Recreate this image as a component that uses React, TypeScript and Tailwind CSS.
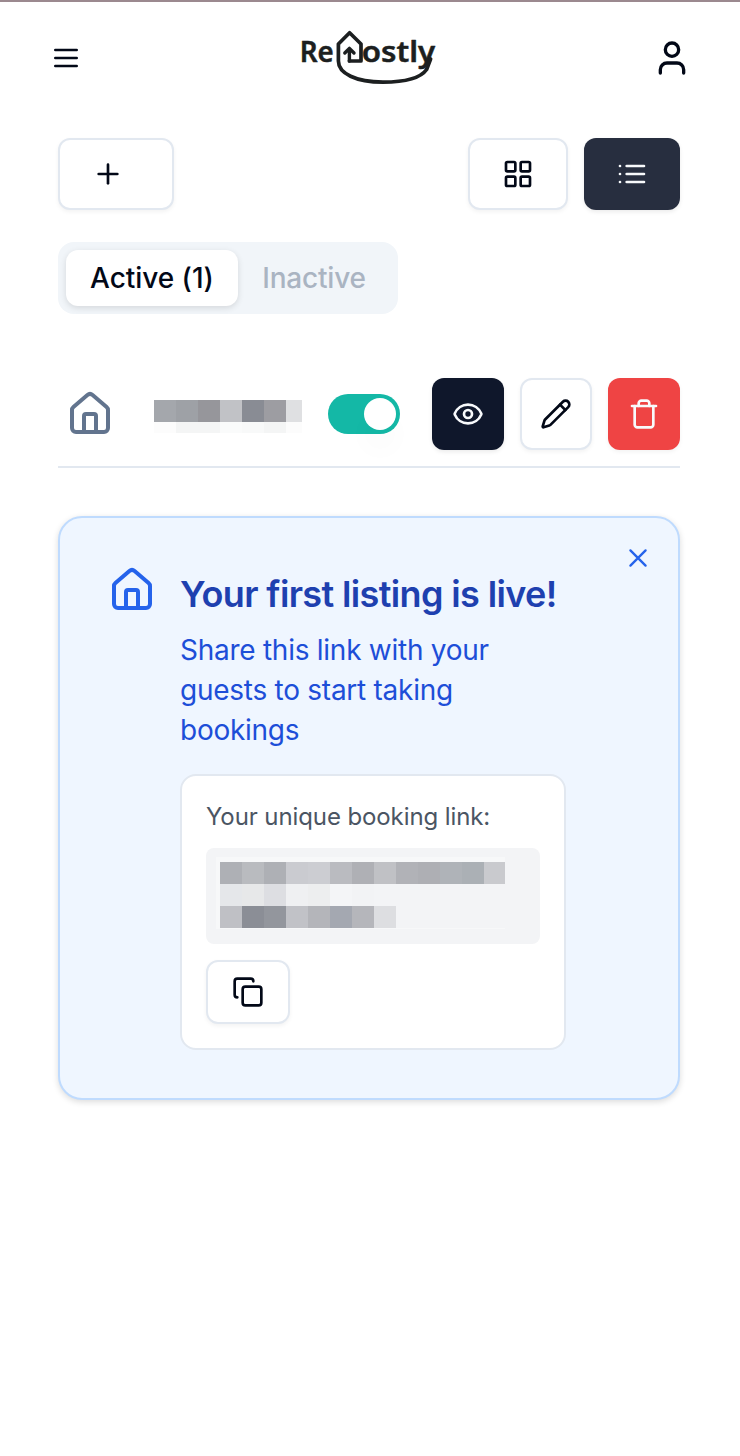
import type { ReactNode } from "react";
import { Copy, Eye, House, LayoutGrid, Pencil, Plus } from "lucide-react";

function Icon({ size, className, children }: { size: number; className?: string; children: ReactNode }) {
  return (
    <svg
      width={size}
      height={size}
      viewBox="0 0 24 24"
      fill="none"
      stroke="currentColor"
      strokeWidth={2}
      strokeLinecap="round"
      strokeLinejoin="round"
      className={className}
    >
      {children}
    </svg>
  );
}

function Logo() {
  return (
    <svg width="140" height="60" viewBox="297 28 140 60" fill="none" stroke="#1c1f20" strokeLinecap="round" strokeLinejoin="round">
      <g fill="#1c1f20" stroke="none" fontFamily="Noto Sans, sans-serif" fontWeight="600" fontSize="29.5">
        <text x="299.8" y="62.3" textLength="34" lengthAdjust="spacingAndGlyphs" stroke="#1c1f20" strokeWidth="0.5">Re</text>
        <text x="361.8" y="62.3" textLength="73.5" lengthAdjust="spacingAndGlyphs" stroke="#1c1f20" strokeWidth="0.5">ostly</text>
      </g>
      <path
        d="M349.4 61H361V44L349.6 32.8L338.4 44V61C338.4 73.5 356 82.1 383 82.1C406 82.1 421 77.5 426.6 69.5L430.6 59"
        strokeWidth="3.7"
      />
      <path d="M349.4 61V49.5M344.8 53L349.4 48.4L354 53" strokeWidth="3.4" />
    </svg>
  );
}

function Mosaic({ rows }: { rows: { height: number; cells: [string, number][] }[] }) {
  return (
    <div>
      {rows.map((row, i) => (
        <div key={i} className="flex" style={{ height: row.height }}>
          {row.cells.map(([color, width], j) => (
            <div key={j} style={{ width, backgroundColor: color }} />
          ))}
        </div>
      ))}
    </div>
  );
}

const nameRows: { height: number; cells: [string, number][] }[] = [
  { height: 22, cells: [["#a4a7ac", 22], ["#9ea1a6", 22], ["#96969b", 22], ["#c1c2c6", 22], ["#898c94", 22], ["#9d9da2", 22], ["#dfe0e2", 16]] },
  { height: 11, cells: [["#fcfcfc", 22], ["#f4f5f5", 44], ["#fafbfb", 22], ["#f8f9f9", 22], ["#f4f5f5", 22], ["#fcfcfc", 16]] },
];

const linkRows: { height: number; cells: [string, number][] }[] = [
  {
    height: 22,
    cells: [
      ["#aeb0b5", 22], ["#b9bbbf", 22], ["#aeb0b5", 22], ["#cacbd0", 22], ["#cccdd2", 22], ["#babbc0", 22], ["#afb0b5", 22],
      ["#c0c1c5", 22], ["#b1b2b7", 22], ["#aeafb4", 22], ["#afb3b8", 22], ["#abb0b5", 22], ["#c9cace", 21],
    ],
  },
  {
    height: 22,
    cells: [["#e5e7ea", 22], ["#e7e8e9", 22], ["#dddee2", 22], ["#eff0f2", 22], ["#edeeef", 22], ["#f4f5f7", 22], ["#f2f3f5", 22], ["#f3f4f6", 131]],
  },
  {
    height: 22,
    cells: [["#bfc0c5", 22], ["#8b8e96", 22], ["#93969d", 22], ["#c1c2c7", 22], ["#b4b5ba", 22], ["#a4a8b1", 22], ["#b5b6bb", 22], ["#dddee1", 22], ["#f3f4f6", 109]],
  },
];

export default function App() {
  return (
    <div className="min-h-[1456px] w-[740px] bg-white font-['Inter',sans-serif] text-[#020817]">
      <div className="h-0.5 bg-[#9b898f]" />
      <header className="flex h-28 items-center justify-between pr-12 pl-[50px]">
        <button aria-label="Menu">
          <Icon size={32}>
            <path d="M4 6h16M4 12h16M4 18h16" />
          </Icon>
        </button>
        <Logo />
        <button aria-label="Account">
          <Icon size={40}>
            <path d="M19 21v-2a4 4 0 0 0-4-4H9a4 4 0 0 0-4 4v2" />
            <circle cx="12" cy="7" r="4" />
          </Icon>
        </button>
      </header>

      <main className="pt-6 pr-[60px] pl-[58px]">
        <div className="flex justify-between">
          <button aria-label="Add listing" className="flex h-[72px] w-[116px] items-center rounded-xl border-2 border-slate-200 bg-white pl-8 shadow-[0_2px_4px_rgba(0,0,0,0.05)]">
            <Plus size={32} />
          </button>
          <div className="flex gap-4">
            <button aria-label="Grid view" className="flex h-[72px] w-[100px] items-center justify-center rounded-xl border-2 border-slate-200 bg-white shadow-[0_2px_4px_rgba(0,0,0,0.05)]">
              <LayoutGrid size={32} />
            </button>
            <button aria-label="List view" className="flex h-[72px] w-24 items-center justify-center rounded-xl bg-[#272e3f] text-slate-50 shadow-[0_2px_4px_rgba(0,0,0,0.08)]">
              <Icon size={32}>
                <path d="M8 6h13M8 12h13M8 18h13M3 6h.01M3 12h.01M3 18h.01" />
              </Icon>
            </button>
          </div>
        </div>

        <div className="mt-8 flex h-[72px] w-[340px] rounded-2xl bg-slate-100 p-2 text-[28px] leading-10 font-medium">
          <button className="flex w-[172px] items-center justify-center rounded-xl bg-white whitespace-nowrap shadow-[0_2px_6px_rgba(0,0,0,0.12)]">
            <span className="tracking-[-0.05px]">Active (1)</span>
          </button>
          <button className="flex w-[152px] items-center justify-center text-[#aab4c2]">
            <span className="tracking-[-0.2px]">Inactive</span>
          </button>
        </div>

        <div className="mt-12 flex h-[106px] items-center border-b-2 border-slate-200">
          <House size={48} className="ml-2 text-slate-500" />
          <div className="mt-1 ml-10 w-[148px]">
            <Mosaic rows={nameRows} />
          </div>
          <button role="switch" aria-checked="true" aria-label="Listing active" className="ml-[26px] flex h-10 w-[72px] items-center justify-end rounded-full bg-[#14b8a6] p-1">
            <span className="size-8 rounded-full bg-white shadow-[0_20px_30px_-6px_rgba(0,0,0,0.06)]" />
          </button>
          <div className="ml-8 flex gap-4">
            <button aria-label="View" className="flex size-[72px] items-center justify-center rounded-xl bg-slate-900 text-slate-50 shadow-[0_2px_4px_rgba(0,0,0,0.08)]">
              <Eye size={32} />
            </button>
            <button aria-label="Edit" className="flex size-[72px] items-center justify-center rounded-xl border-2 border-slate-200 bg-white shadow-[0_2px_4px_rgba(0,0,0,0.05)]">
              <Pencil size={32} />
            </button>
            <button aria-label="Delete" className="flex size-[72px] items-center justify-center rounded-xl bg-[#ef4444] text-slate-50 shadow-[0_2px_4px_rgba(0,0,0,0.05)]">
              <Icon size={32}>
                <path d="M3 6h18" />
                <path d="M19 6v14c0 1-1 2-2 2H7c-1 0-2-1-2-2V6" />
                <path d="M8 6V4c0-1 1-2 2-2h4c1 0 2 1 2 2v2" />
              </Icon>
            </button>
          </div>
        </div>

        <section className="relative mt-12 flex h-[584px] rounded-3xl border-2 border-[#bfdbfe] bg-[#eff6ff] pt-12 pl-12 shadow-[0_2px_6px_rgba(0,0,0,0.14)]">
          <button aria-label="Dismiss" className="absolute top-[26px] right-[26px] text-[#2563eb]">
            <Icon size={28}>
              <path d="M5.5 5.5l13 13M18.5 5.5l-13 13" />
            </Icon>
          </button>
          <House size={48} className="text-[#2563eb]" />
          <div className="ml-6 w-[386px]">
            <h2 className="h-16 pt-2 text-[36px] leading-10 font-semibold tracking-[-0.63px] whitespace-nowrap text-[#1e40af]">Your first listing is live!</h2>
            <p className="text-[28px] leading-10 tracking-[-0.26px] whitespace-nowrap text-[#1d4ed8]">
              Share this link with your
              <br />
              guests to start taking
              <br />
              bookings
            </p>
            <div className="mt-6 h-[276px] rounded-2xl border-2 border-slate-200 bg-white p-6">
              <p className="pt-px text-[24px] leading-[31px] tracking-[-0.1px] whitespace-nowrap text-[#4b5563]">Your unique booking link:</p>
              <div className="mt-4 h-24 rounded-lg bg-gray-100 pt-[9px] pl-2.5">
                <div className="h-[72px] w-[289px] bg-[#f7f8f9] pt-[5px] pl-1">
                  <Mosaic rows={linkRows} />
                </div>
              </div>
              <button aria-label="Copy link" className="mt-4 flex h-16 w-[84px] items-center justify-center rounded-xl border-2 border-slate-200 bg-white shadow-[0_2px_4px_rgba(0,0,0,0.05)]">
                <Copy size={32} />
              </button>
            </div>
          </div>
        </section>
      </main>
    </div>
  );
}
